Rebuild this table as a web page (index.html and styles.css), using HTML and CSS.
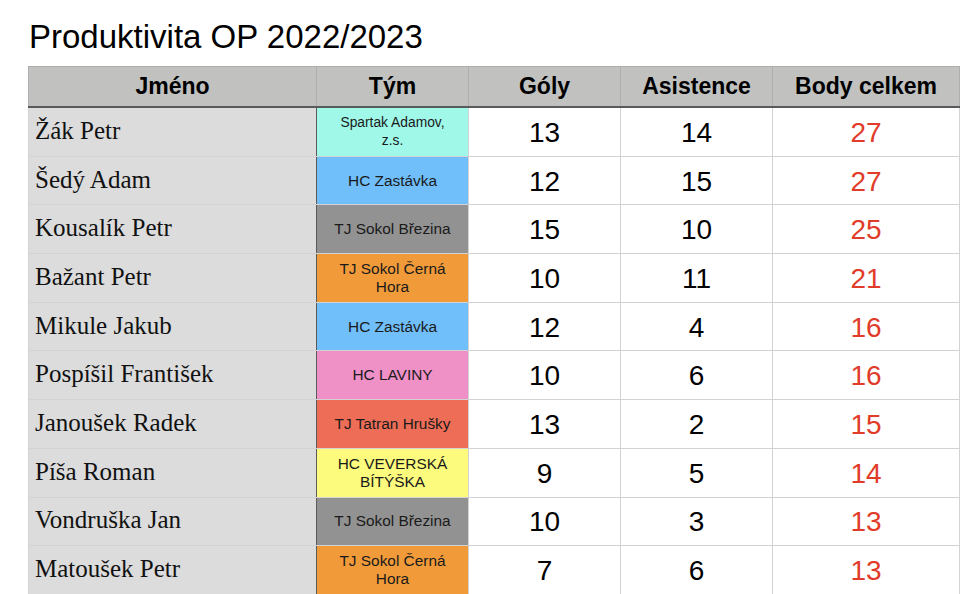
FILE: index.html
```html
<!DOCTYPE html>
<html>
  <head>
    <meta charset="UTF-8" />
    <title>Produktivita OP 2022/2023</title>
    <link rel="stylesheet" href="styles.css">
  </head>

  <body>
    <h1 id="title">Produktivita OP 2022/2023</h1>

    <table id="scoreTable">
      <colgroup>
        <col class="colName" />
        <col class="colTeam" />
        <col class="colNum" />
        <col class="colNum" />
        <col class="colTotal" />
      </colgroup>
      <thead>
        <tr>
          <th class="nameHead">Jméno</th>
          <th>Tým</th>
          <th>Góly</th>
          <th>Asistence</th>
          <th>Body celkem</th>
        </tr>
      </thead>
      <tbody>
        <tr>
          <td class="name">Žák Petr</td>
          <td class="team adamov">Spartak Adamov,<br />z.s.</td>
          <td>13</td>
          <td>14</td>
          <td class="total">27</td>
        </tr>
        <tr>
          <td class="name">Šedý Adam</td>
          <td class="team zastavka">HC Zastávka</td>
          <td>12</td>
          <td>15</td>
          <td class="total">27</td>
        </tr>
        <tr>
          <td class="name">Kousalík Petr</td>
          <td class="team brezina">TJ Sokol Březina</td>
          <td>15</td>
          <td>10</td>
          <td class="total">25</td>
        </tr>
        <tr>
          <td class="name">Bažant Petr</td>
          <td class="team cernaHora">TJ Sokol Černá<br />Hora</td>
          <td>10</td>
          <td>11</td>
          <td class="total">21</td>
        </tr>
        <tr>
          <td class="name">Mikule Jakub</td>
          <td class="team zastavka">HC Zastávka</td>
          <td>12</td>
          <td>4</td>
          <td class="total">16</td>
        </tr>
        <tr>
          <td class="name">Pospíšil František</td>
          <td class="team laviny">HC LAVINY</td>
          <td>10</td>
          <td>6</td>
          <td class="total">16</td>
        </tr>
        <tr>
          <td class="name">Janoušek Radek</td>
          <td class="team hrusky">TJ Tatran Hrušky</td>
          <td>13</td>
          <td>2</td>
          <td class="total">15</td>
        </tr>
        <tr>
          <td class="name">Píša Roman</td>
          <td class="team bityska">HC VEVERSKÁ<br />BÍTÝŠKA</td>
          <td>9</td>
          <td>5</td>
          <td class="total">14</td>
        </tr>
        <tr>
          <td class="name">Vondruška Jan</td>
          <td class="team brezina">TJ Sokol Březina</td>
          <td>10</td>
          <td>3</td>
          <td class="total">13</td>
        </tr>
        <tr>
          <td class="name">Matoušek Petr</td>
          <td class="team cernaHora">TJ Sokol Černá<br />Hora</td>
          <td>7</td>
          <td>6</td>
          <td class="total">13</td>
        </tr>
      </tbody>
    </table>
  </body>
</html>
```

FILE: styles.css
```css
body {
  margin: 0;
  background: #fff;
  color: #111;
  font-family: "Liberation Sans", Arial, sans-serif;
}

#title {
  margin: 0;
  padding: 17px 0 0 29px;
  height: 49px;
  font-size: 33px;
  font-weight: normal;
  line-height: 40px;
  color: #000;
}

#scoreTable {
  margin-left: 28px;
  width: 931px;
  table-layout: fixed;
  border-collapse: collapse;
}

.colName {
  width: 288px;
}

.colTeam,
.colNum {
  width: 152px;
}

.colTotal {
  width: 187px;
}

th {
  height: 39px;
  padding: 0;
  background-color: #c1c2c0;
  border: 1px solid #adaead;
  border-bottom: 2px solid #5a5a5a;
  font-size: 23px;
  font-weight: bold;
  text-align: center;
  color: #000;
}

td {
  height: 45.7px;
  padding: 2px 0 0;
  border: 1px solid #d3d3d3;
  text-align: center;
  vertical-align: middle;
  font-size: 28px;
  color: #000;
}

td.name {
  padding: 0 0 2px 6px;
  background-color: #dcdcdc;
  border-right: 1px solid #5a5a5a;
  text-align: left;
  font-family: "Liberation Serif", "Times New Roman", serif;
  font-size: 25px;
  color: #111;
}

th.nameHead {
  border-right-color: #adaead;
}

td.team {
  padding: 0;
  height: 47.7px;
  font-size: 15.4px;
  line-height: 18px;
  color: #1a1a1a;
}

td.total {
  color: #e13b29;
}

.adamov {
  background-color: #9ff8e8;
}

td.adamov {
  font-size: 13.8px;
}

.zastavka {
  background-color: #70bffa;
}

.brezina {
  background-color: #929292;
}

.cernaHora {
  background-color: #f19a3a;
}

.laviny {
  background-color: #ef90c7;
}

.hrusky {
  background-color: #ee6d56;
}

.bityska {
  background-color: #fcfb7e;
}
```
